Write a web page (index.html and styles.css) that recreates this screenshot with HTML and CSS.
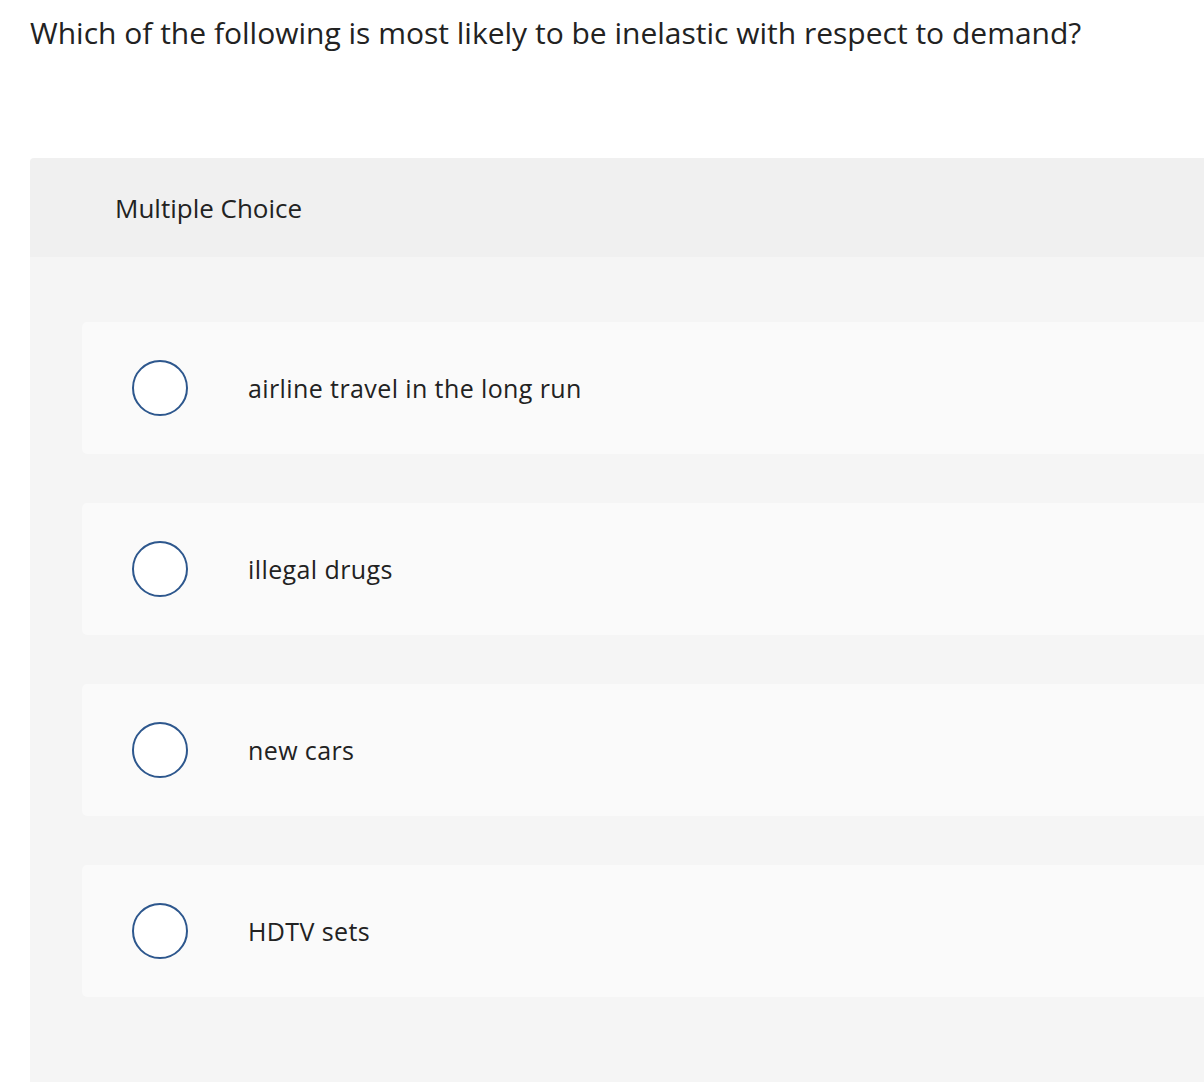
FILE: index.html
```html
<!DOCTYPE html>
<html lang="en">
<head>
  <meta charset="UTF-8" />
  <title>Multiple Choice</title>
  <link rel="stylesheet" href="styles.css">
</head>
<body>
  <div class="page">
    <p class="question">Which of the following is most likely to be inelastic with respect to demand?</p>

    <div class="panel">
      <div class="panel-header">Multiple Choice</div>
      <div class="panel-body">
        <label class="choice">
          <span class="radio"></span>
          <span class="choice-text">airline travel in the long run</span>
        </label>
        <label class="choice">
          <span class="radio"></span>
          <span class="choice-text">illegal drugs</span>
        </label>
        <label class="choice">
          <span class="radio"></span>
          <span class="choice-text">new cars</span>
        </label>
        <label class="choice">
          <span class="radio"></span>
          <span class="choice-text">HDTV sets</span>
        </label>
      </div>
    </div>
  </div>
</body>
</html>
```

FILE: styles.css
```css
html, body {
  margin: 0;
  padding: 0;
  background: #fff;
  font-family: "Open Sans", Lato, sans-serif;
  color: #222;
  overflow: hidden;
}

.page {
  padding: 13px 0 0 30px;
}

.question {
  margin: 0;
  font-size: 30px;
  line-height: 40px;
  white-space: nowrap;
}

.panel {
  margin-top: 105px;
  width: 1300px;
  border-radius: 4px 4px 0 0;
  overflow: hidden;
}

.panel-header {
  background: #f0f0f0;
  height: 99px;
  display: flex;
  align-items: center;
  padding-left: 85px;
  font-size: 26px;
}

.panel-body {
  background: #f5f5f5;
  padding: 65px 0 100px 52px;
  display: flex;
  flex-direction: column;
  gap: 49px;
}

.choice {
  background: #fafafa;
  border-radius: 5px;
  height: 132px;
  display: flex;
  align-items: center;
  cursor: pointer;
}

.radio {
  box-sizing: border-box;
  width: 56px;
  height: 56px;
  margin-left: 50px;
  border: 2px solid #2d578d;
  border-radius: 50%;
  background: #fff;
  flex-shrink: 0;
}

.choice-text {
  margin-left: 60px;
  font-size: 25px;
  letter-spacing: 0.4px;
}
```
